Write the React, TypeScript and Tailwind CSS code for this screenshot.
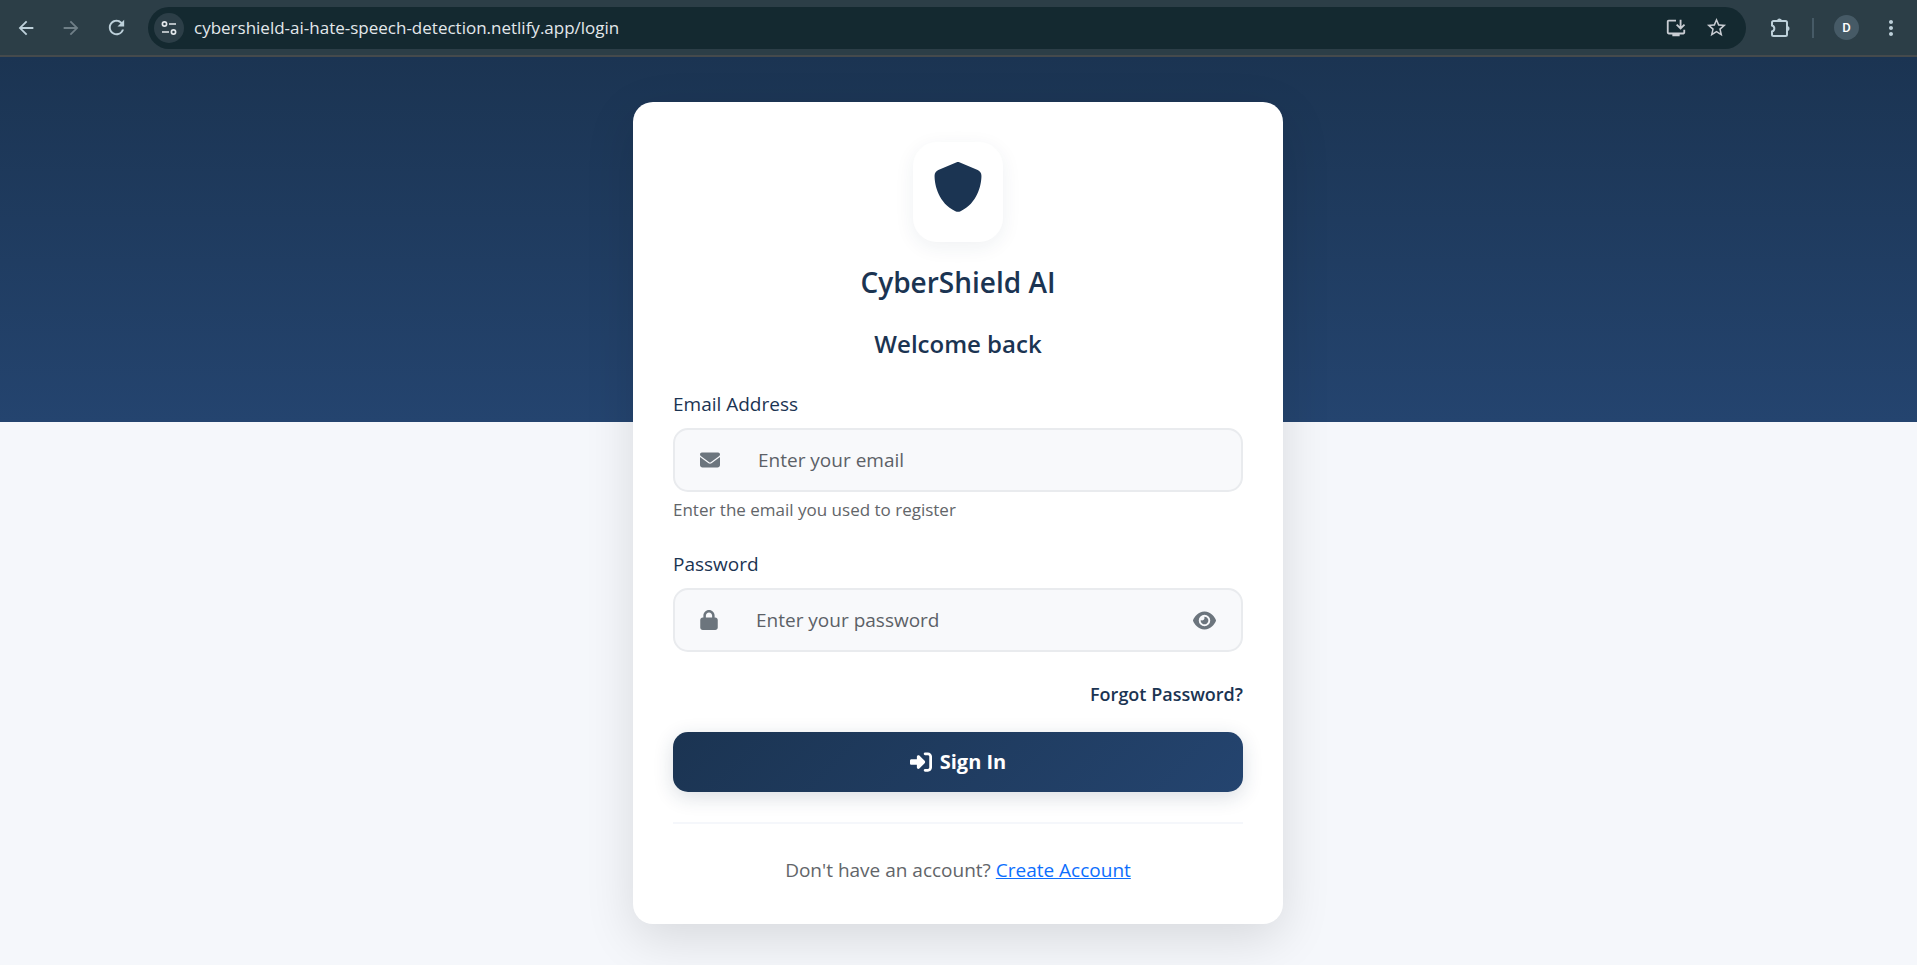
import type { ReactNode } from "react";
import { FaEnvelope, FaEye, FaLock, FaRightToBracket, FaShield } from "react-icons/fa6";
import {
  MdArrowBack,
  MdArrowForward,
  MdMoreVert,
  MdOutlineInstallDesktop,
  MdRefresh,
  MdStarBorder,
} from "react-icons/md";

function BarButton({ label, children }: { label: string; children: ReactNode }) {
  return (
    <button type="button" aria-label={label} className="flex size-6 shrink-0 items-center justify-center">
      {children}
    </button>
  );
}

function BrowserBar() {
  return (
    <div className="flex h-[57px] items-center border-b-2 border-[#454a4c] bg-[#2c3e47] px-[14px] text-[#bdd0da]">
      <div className="flex items-center gap-[21px] pr-5">
        <BarButton label="Back">
          <MdArrowBack size={22} />
        </BarButton>
        <BarButton label="Forward">
          <MdArrowForward size={22} className="text-[#6f7f87]" />
        </BarButton>
        <BarButton label="Reload">
          <MdRefresh size={23} />
        </BarButton>
      </div>
      <div className="flex h-[42px] min-w-0 grow items-center rounded-full bg-[#142930] pr-[18px] pl-[6px] text-[#c9cdd3]">
        <button
          type="button"
          aria-label="Site information"
          className="flex size-[30px] shrink-0 items-center justify-center rounded-full bg-[#2c3e47]"
        >
          <svg width="18" height="18" viewBox="0 0 18 18" fill="none" stroke="#e1e6ea" strokeWidth="1.7">
            <circle cx="4.5" cy="5" r="2.1" />
            <path d="M9 5h7M2 13h7" />
            <circle cx="13.5" cy="13" r="2.1" />
          </svg>
        </button>
        <input
          type="text"
          aria-label="Address"
          defaultValue="cybershield-ai-hate-speech-detection.netlify.app/login"
          className="ml-2.5 min-w-0 grow bg-transparent text-[17px] text-[#e3e8eb] outline-none"
        />
        <div className="flex items-center gap-4">
          <BarButton label="Install app">
            <MdOutlineInstallDesktop size={22} />
          </BarButton>
          <BarButton label="Bookmark">
            <MdStarBorder size={23} />
          </BarButton>
        </div>
      </div>
      <div className="flex items-center gap-5 pl-[22px]">
        <BarButton label="Extensions">
          <svg width="24" height="24" viewBox="0 0 24 24" fill="none" stroke="currentColor" strokeWidth="2">
            <path d="M5.5 5h12A1.5 1.5 0 0 1 19 6.5v12a1.5 1.5 0 0 1-1.5 1.5h-12A1.5 1.5 0 0 1 4 18.5v-3a3.1 3.1 0 0 0 0-6v-3A1.5 1.5 0 0 1 5.5 5Z" />
            <path d="M9 5a2.5 2.5 0 0 1 5 0ZM19 10a2.5 2.5 0 0 1 0 5Z" fill="currentColor" stroke="none" />
          </svg>
        </BarButton>
        <span className="h-5 w-0.5 bg-[#465a66]" />
        <button
          type="button"
          aria-label="Profile"
          className="flex size-[25px] items-center justify-center rounded-full bg-[#465a66] font-[Roboto,sans-serif] text-[13px] font-medium text-white"
        >
          D
        </button>
        <BarButton label="Menu">
          <MdMoreVert size={24} />
        </BarButton>
      </div>
    </div>
  );
}

export default function App() {
  return (
    <div className="flex min-h-screen flex-col bg-[#f5f7fb] font-['Open_Sans','Noto_Sans',sans-serif]">
      <BrowserBar />
      <div className="flex grow items-start justify-center bg-linear-to-b from-[#1b3452] to-[#24446f] bg-[length:100%_365px] bg-no-repeat pt-[45px] pr-[17px] pb-10 pl-4">
        <main className="w-full max-w-[650px] rounded-[20px] bg-white px-10 pt-10 pb-[38px] shadow-[0_15px_50px_rgba(0,0,0,0.12)]">
          <div className="mx-auto flex h-[100px] w-[90px] justify-center rounded-[24px] bg-white pt-5 shadow-[0_5px_20px_rgba(27,52,82,0.07)]">
            <FaShield size={50} className="text-[#1b3452]" />
          </div>
          <h1 className="mt-5 text-center text-[28px] leading-10 font-semibold text-[#1b3452]">CyberShield AI</h1>
          <h2 className="mt-6 text-center text-2xl leading-9 font-semibold text-[#1b3452]">Welcome back</h2>
          <form onSubmit={(e) => e.preventDefault()}>
            <label htmlFor="email" className="mt-[26px] block text-[19px] leading-8 text-[#1b3452]">
              Email Address
            </label>
            <div className="mt-2 flex h-16 items-center rounded-[15px] border-2 border-[#e9ebee] bg-[#f8f9fb] px-[25px]">
              <FaEnvelope size={20} className="shrink-0 text-[#6c757d]" />
              <input
                id="email"
                type="email"
                placeholder="Enter your email"
                className="ml-[38px] min-w-0 grow bg-transparent text-[19px] outline-none placeholder:text-[#5c6167]"
              />
            </div>
            <p className="mt-1 text-[17px] leading-7 text-[#626569]">Enter the email you used to register</p>
            <label htmlFor="password" className="mt-6 block text-[19px] leading-8 text-[#1b3452]">
              Password
            </label>
            <div className="mt-2 flex h-16 items-center rounded-[15px] border-2 border-[#e9ebee] bg-[#f8f9fb] px-[25px]">
              <FaLock className="h-5 w-[18px] shrink-0 text-[#6c757d]" />
              <input
                id="password"
                type="password"
                placeholder="Enter your password"
                className="ml-[38px] min-w-0 grow bg-transparent text-[19px] outline-none placeholder:text-[#5c6167]"
              />
              <button type="button" aria-label="Show password" className="shrink-0 text-[#6c757d]">
                <FaEye size={23} />
              </button>
            </div>
            <div className="mt-7 text-right text-lg leading-7 font-semibold text-[#1b3452]">
              <a href="#forgot">Forgot Password?</a>
            </div>
            <button
              type="submit"
              className="mt-6 flex h-[60px] w-full items-center justify-center gap-2 rounded-[15px] bg-linear-135 from-[#1b3452] to-[#24446f] text-xl font-bold text-white shadow-[0_5px_20px_rgba(27,52,82,0.16)]"
            >
              <FaRightToBracket size={22} />
              Sign In
            </button>
          </form>
          <p className="mt-[30px] border-t-2 border-[#f5f7fb] pt-[30px] text-center text-[19px] leading-8 text-[#626569]">
            Don't have an account?{" "}
            <a href="#register" className="text-[#0d6efd] underline">
              Create Account
            </a>
          </p>
        </main>
      </div>
    </div>
  );
}
